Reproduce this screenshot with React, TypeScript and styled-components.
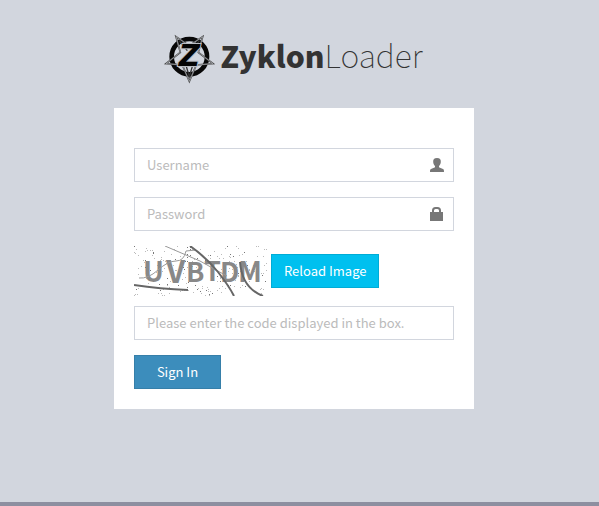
import React, { useState } from "react";
import styled, { createGlobalStyle, css } from "styled-components";

const GlobalStyle = createGlobalStyle`
  *, *::before, *::after { box-sizing: border-box; }
  body {
    margin: 0;
    background: #d2d6de;
    color: #333;
    font: 400 13px/20px "Noto Sans CJK SC", "Open Sans", sans-serif;
  }
`;

const Page = styled.div`
  min-height: 100vh;
  display: flex;
  flex-direction: column;
  border-bottom: 4px solid #8d8fa0;
`;

const LoginBox = styled.main`
  width: 100%;
  max-width: 371px;
  margin: 0 auto;
  padding: 28px 11px 20px 0;
`;

const Brand = styled.h1`
  display: flex;
  align-items: flex-start;
  justify-content: center;
  height: 60px;
  margin: 0 0 20px;
  padding-right: 5px;
  font-size: 32px;
  line-height: 52px;
  font-weight: 100;
  color: #333;
  white-space: nowrap;

  b { font-size: 30px; font-weight: 900; }
`;

const Emblem = styled.svg`
  width: 60px;
  height: 60px;
  flex: none;
`;

const Panel = styled.form`
  display: flex;
  flex-direction: column;
  align-items: stretch;
  gap: 15px;
  padding: 40px 20px 20px;
  background: #fff;
`;

const Field = styled.label`
  display: flex;
  align-items: center;
  height: 34px;
  padding: 0 9px 0 12px;
  border: 1px solid #d2d6de;
  color: #777;
  &:focus-within { border-color: #3c8dbc; }
`;

const TextBox = styled.input`
  flex: 1;
  min-width: 0;
  height: 32px;
  padding: 0 0 2px;
  border: 0;
  outline: 0;
  background: transparent;
  color: #555;
  font: inherit;
  &::placeholder { color: #bbb; opacity: 1; }
`;

const FieldIcon = styled.svg`
  width: 14px;
  height: 14px;
  flex: none;
  fill: currentColor;
`;

const CodeGroup = styled.div`
  display: flex;
  flex-direction: column;
  gap: 10px;
`;

const CodeRow = styled.div`
  display: flex;
  align-items: center;
  gap: 4px;
`;

const Captcha = styled.svg`
  width: 133px;
  height: 50px;
  flex: none;
  font-family: "Noto Sans CJK SC", sans-serif;
  font-weight: 700;
`;

const Button = styled.button<{ $primary?: boolean }>`
  height: 34px;
  padding: 0 12px;
  border: 1px solid #00acd6;
  background: #00c0ef;
  color: #fff;
  font: inherit;
  cursor: pointer;
  ${(p) =>
    p.$primary &&
    css`
      align-self: flex-start;
      width: 87px;
      border-color: #367fa9;
      background: #3c8dbc;
    `}
`;

const specks = Array.from({ length: 230 }, (_, i) => {
  const a = Math.sin(i * 12.9898 + 4.1) * 43758.5453;
  const b = Math.sin(i * 78.233 + 1.7) * 24634.6345;
  return {
    x: Math.floor((a - Math.floor(a)) * 133),
    y: Math.floor((b - Math.floor(b)) * 50),
    dark: i % 4 === 0,
  };
});

const letters = [
  { char: "U", x: 9, y: 36, size: 28 },
  { char: "V", x: 32, y: 37, size: 31 },
  { char: "B", x: 52, y: 36, size: 27 },
  { char: "T", x: 70, y: 35, size: 27 },
  { char: "D", x: 86, y: 36, size: 27 },
  { char: "M", x: 104, y: 36, size: 28 },
];

export default function App() {
  const [username, setUsername] = useState("");
  const [password, setPassword] = useState("");
  const [code, setCode] = useState("");

  return (
    <>
      <GlobalStyle />
      <Page>
        <LoginBox>
          <Brand>
            <Emblem viewBox="0 0 180 180" aria-hidden="true">
              <circle cx="88" cy="86" r="53" fill="none" stroke="#080808" strokeWidth="14" />
              <path
                d="M48 26 88 53 128 26 115 73 159 107 109 111 88 160 67 111 18 107 61 73Z"
                fill="none"
                stroke="#444"
                strokeWidth="5"
              />
              <path
                d="M48 26 88 53 128 26 115 73 159 107 109 111 88 160 67 111 18 107 61 73Z"
                fill="none"
                stroke="#b4b7bd"
                strokeWidth="2"
              />
              <path d="M57 38 82 68M118 38 96 68M78 112 88 146 98 112" fill="none" stroke="#333" strokeWidth="4" />
              <text
                x="88"
                y="113"
                fontFamily="DejaVu Sans"
                fontWeight="700"
                fontStyle="italic"
                fontSize="88"
                textAnchor="middle"
                fill="#050505"
                stroke="#b9bcc2"
                strokeWidth="6"
                paintOrder="stroke"
              >
                Z
              </text>
            </Emblem>
            <span>
              <b>Zyklon</b>Loader
            </span>
          </Brand>

          <Panel onSubmit={(e) => e.preventDefault()}>
            <Field>
              <TextBox
                aria-label="Username"
                placeholder="Username"
                value={username}
                onChange={(e) => setUsername(e.target.value)}
              />
              <FieldIcon viewBox="0 0 14 14" aria-hidden="true">
                <path d="M7 0C4.200 0 3 1.500 3.200 4 3.300 5.800 4 7 5 8V9.200C4 10 1.600 10.200.6 11.200 0 11.800 0 13 0 14H14C14 13 14 11.800 13.400 11.200 12.400 10.200 10 10 9 9.200V8C10 7 10.700 5.800 10.800 4 11 1.500 9.800 0 7 0Z" />
              </FieldIcon>
            </Field>
            <Field>
              <TextBox
                type="password"
                aria-label="Password"
                placeholder="Password"
                value={password}
                onChange={(e) => setPassword(e.target.value)}
              />
              <FieldIcon viewBox="0 0 14 14" aria-hidden="true">
                <path
                  d="M0 5H2V3.500Q2 0 5.500 0H7.500Q11 0 11 3.500V5H13V14H0ZM4 5H9V3.500Q9 2 7.500 2H5.500Q4 2 4 3.500Z"
                  fillRule="evenodd"
                />
              </FieldIcon>
            </Field>
            <CodeGroup>
              <CodeRow>
                <Captcha viewBox="0 0 133 50" role="img" aria-label="Verification code">
                  {specks.map((s, i) => (
                    <rect key={i} x={s.x} y={s.y} width="1" height="1" fill={s.dark ? "#777" : "#bbb"} />
                  ))}
                  {letters.map((l) => (
                    <text key={l.char} x={l.x} y={l.y} fontSize={l.size} fill="#888">
                      {l.char}
                    </text>
                  ))}
                  <g fill="none" stroke="#666">
                    <path d="M5 32Q14 33 24 24T42 15 52 5L62 4" stroke="#999" />
                    <path d="M31 0 66 15Q80 23 93 30" stroke="#999" />
                    <path d="M0 39Q26 43 54 44" strokeWidth="2" />
                    <path d="M56 0Q73 12 84 26T100 50" strokeWidth="2" />
                    <path d="M106 16Q108 42 129 50" strokeWidth="2" />
                  </g>
                </Captcha>
                <Button type="button">Reload Image</Button>
              </CodeRow>
              <Field>
                <TextBox
                  aria-label="Verification code"
                  placeholder="Please enter the code displayed in the box."
                  value={code}
                  onChange={(e) => setCode(e.target.value)}
                />
              </Field>
            </CodeGroup>
            <Button type="submit" $primary>
              Sign In
            </Button>
          </Panel>
        </LoginBox>
      </Page>
    </>
  );
}
